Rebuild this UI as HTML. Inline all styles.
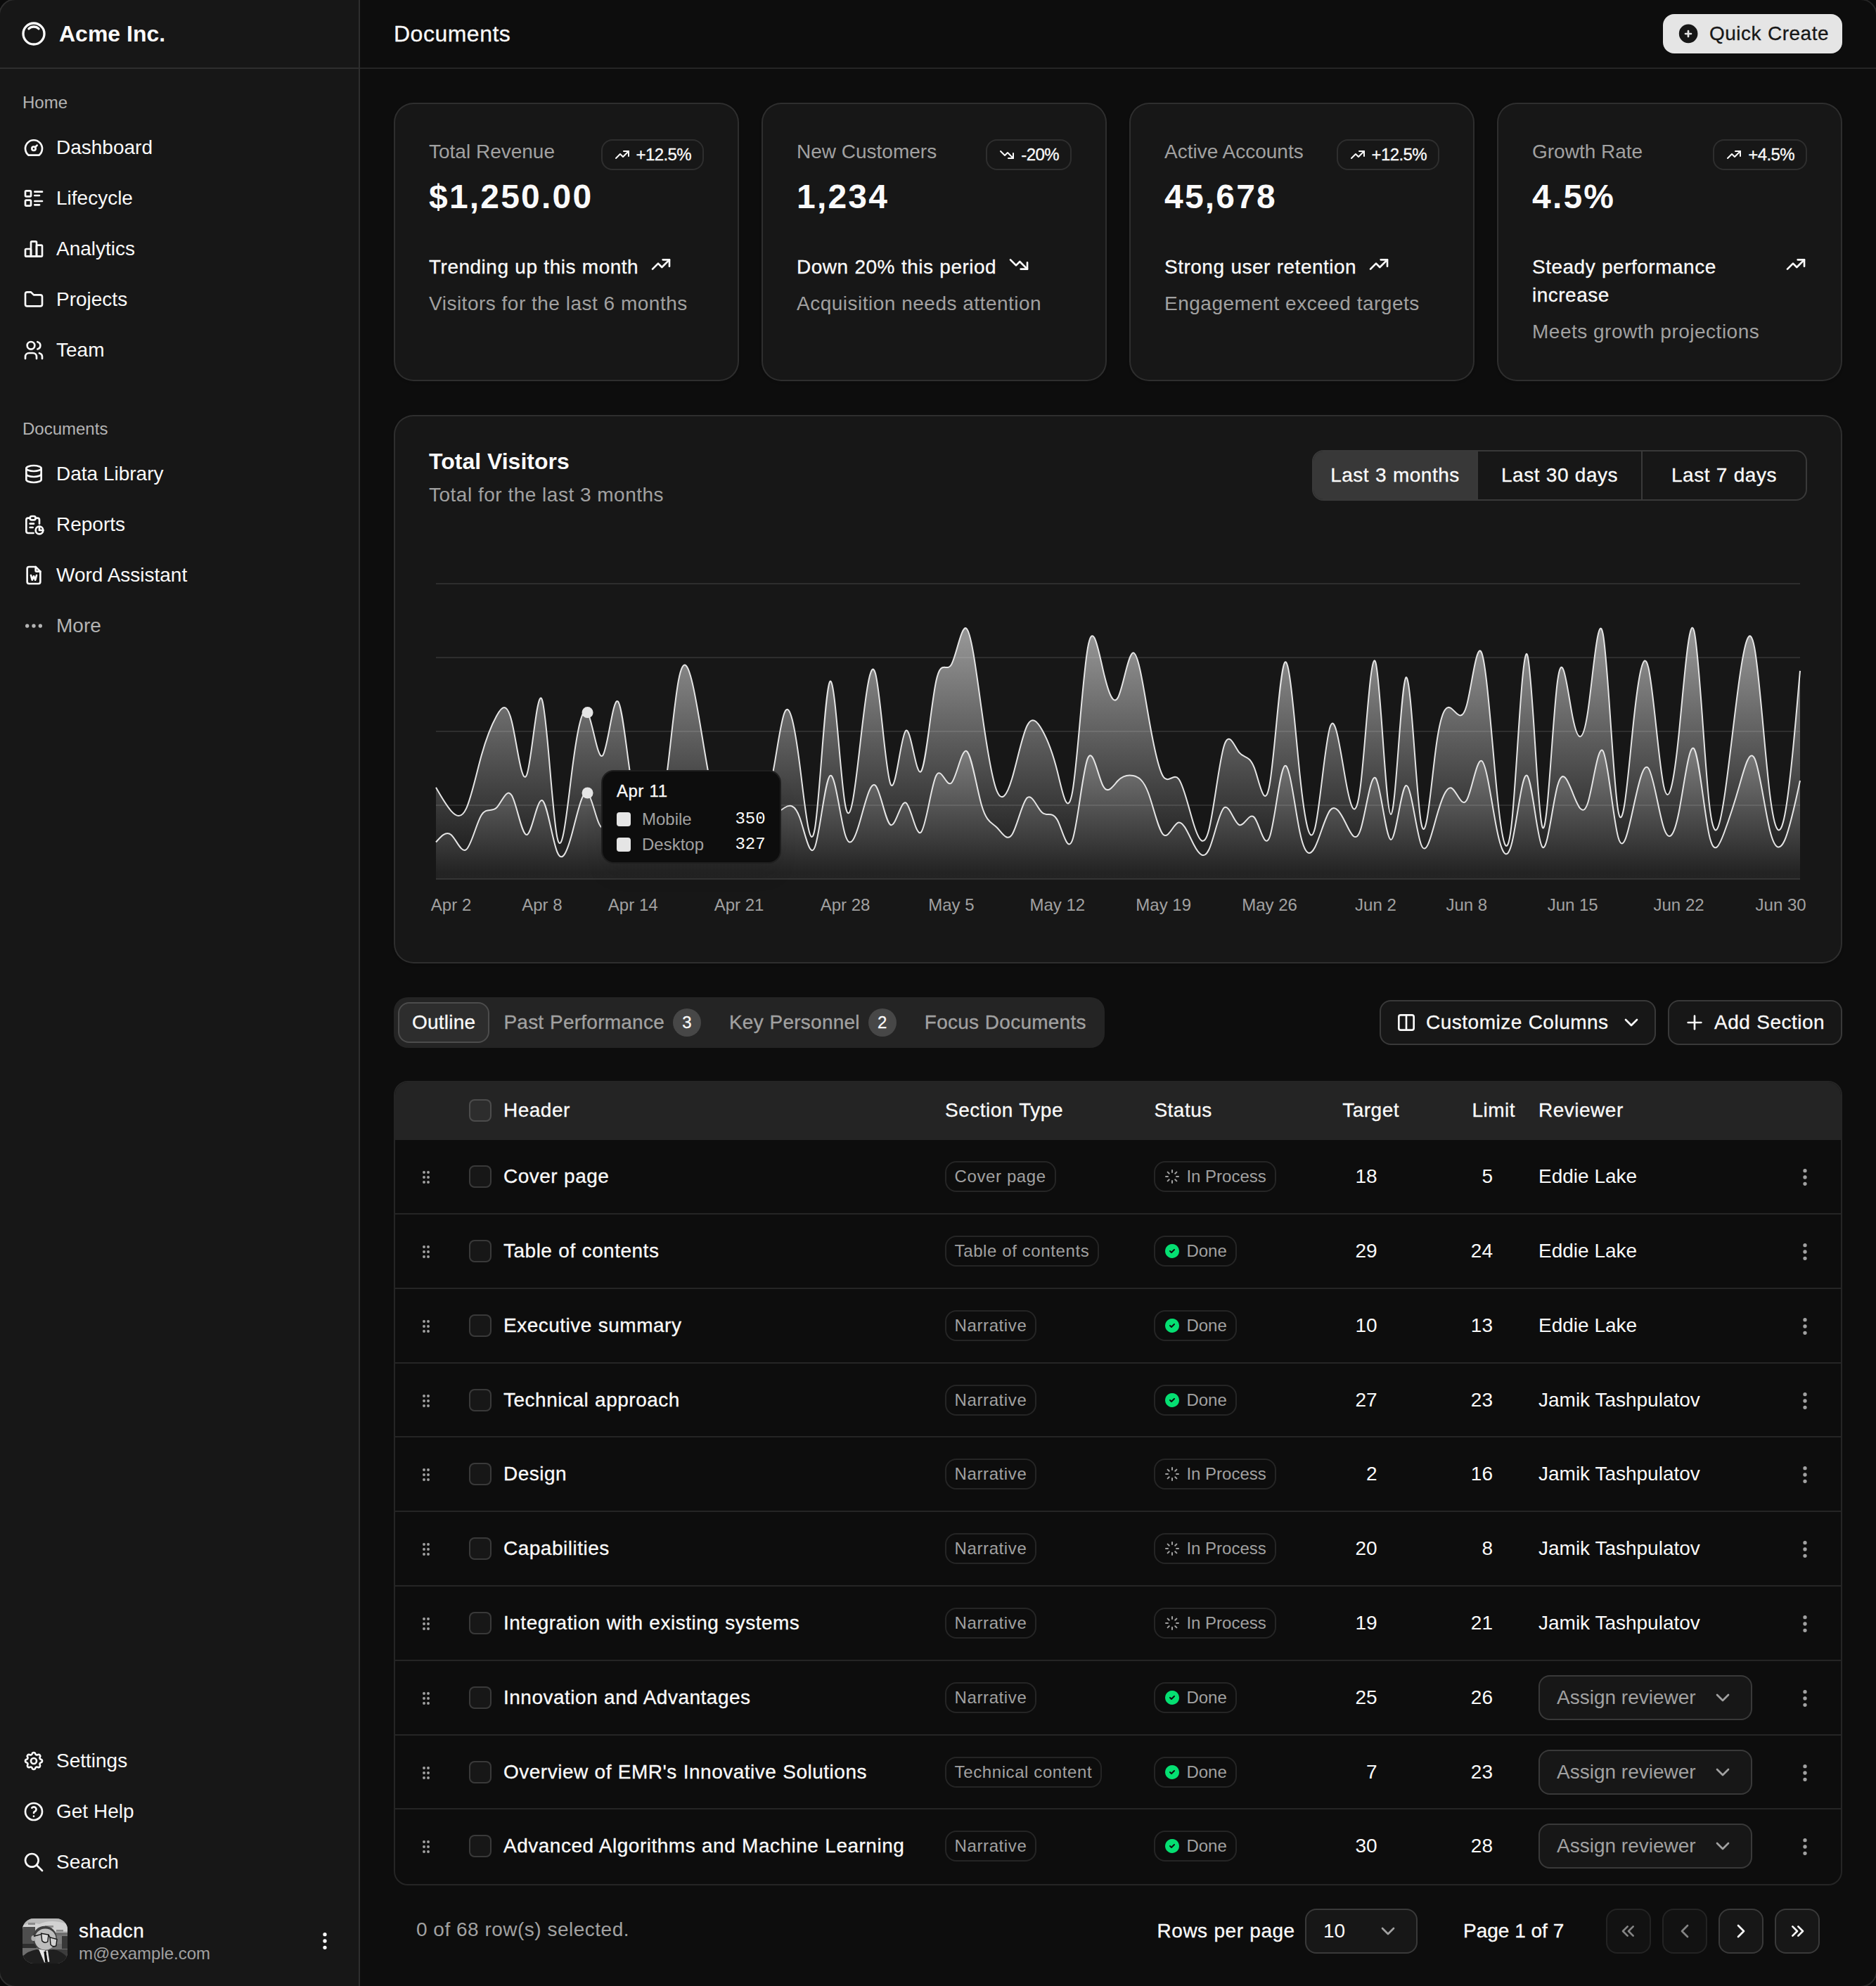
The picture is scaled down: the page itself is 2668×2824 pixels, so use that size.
<!DOCTYPE html><html><head><meta charset="utf-8"><title>Documents</title><style>
*{box-sizing:border-box;margin:0;padding:0}
html,body{background:#0d0d0d;width:2668px;height:2824px;overflow:hidden}
body{font-family:"Liberation Sans",sans-serif;color:#fafafa;-webkit-font-smoothing:antialiased}
#root{zoom:2;position:relative;width:1334px;height:1412px;overflow:hidden;background:#0d0d0d}
@media (max-width:2000px){html,body{width:1334px;height:1412px}#root{zoom:1}}
.ic{display:block;flex-shrink:0}
.m{letter-spacing:.25px;word-spacing:.3px;-webkit-text-stroke:.15px currentColor}
.ws{letter-spacing:.25px}
.abs{position:absolute}
/* sidebar */
.sb{position:absolute;left:0;top:0;width:256px;height:1412px;background:#171717;border-right:1px solid rgba(255,255,255,.1)}
.sb-head{position:absolute;left:0;top:0;width:255px;height:49px;border-bottom:1px solid rgba(255,255,255,.1)}
.logo{position:absolute;left:14px;top:14px}
.brand{position:absolute;left:42px;top:12px;font-size:16px;line-height:24px;font-weight:700}
.grp-label{position:absolute;left:16px;height:32px;line-height:32px;font-size:12px;color:rgba(250,250,250,.7)}
.nav{position:absolute;left:8px;width:239px;height:32px;display:flex;align-items:center;gap:8px;padding:0 8px;font-size:14px;line-height:20px}
.nav.dim{color:rgba(250,250,250,.7)}
.user{position:absolute;left:8px;top:1356px;width:239px;height:48px;display:flex;align-items:center;gap:8px;padding:0 8px}
.avatar{width:32px;height:32px;border-radius:8px;overflow:hidden;flex-shrink:0;position:relative;background:#6b6b6b}
.uname{font-size:14px;line-height:17.5px}
.umail{font-size:12px;line-height:15px;color:#a1a1a1}
/* main */
.main{position:absolute;left:256px;top:0;width:1078px;height:1412px}
.mhead{position:absolute;left:0;top:0;width:1078px;height:49px;border-bottom:1px solid rgba(255,255,255,.1)}
.mtitle{position:absolute;left:24px;top:12px;font-size:16px;line-height:24px}
.qc{position:absolute;left:926.5px;top:10px;width:127.5px;height:28px;border-radius:8px;background:#e5e5e5;color:#171717;display:flex;align-items:center;padding-left:10px;gap:7px;font-size:14px;line-height:20px}
.card{position:absolute;background:#171717;border:1px solid rgba(255,255,255,.1);border-radius:14px;box-shadow:0 1px 2px rgba(0,0,0,.05)}
.kpi{top:73px;width:245.5px;height:198px}
.kpi .desc{position:absolute;left:24px;top:24px;font-size:14px;line-height:20px;color:#a1a1a1}
.kpi .val{position:absolute;left:24px;top:50px;font-size:24px;line-height:32px;font-weight:700;letter-spacing:1.1px}
.badge{position:absolute;right:24px;top:25px;height:22px;border:1px solid rgba(255,255,255,.1);border-radius:8px;display:flex;align-items:center;gap:4px;padding:0 8px;font-size:12px;line-height:16px}
.kpi .foot{position:absolute;left:24px;top:106px;width:195.5px;font-size:14px;line-height:20px}
.kpi .f1{display:flex;gap:8px;align-items:flex-start}
.kpi .f1 svg{margin-top:0}
.kpi .f2{margin-top:6px;color:#a1a1a1}
/* chart */
.chartcard{left:24px;top:295px;width:1030px;height:390px}
.ct{position:absolute;left:24px;top:24px;font-size:16px;line-height:16px;font-weight:700}
.cd{position:absolute;left:24px;top:46px;font-size:14px;line-height:20px;color:#a1a1a1}
.tg{position:absolute;right:24px;top:24px;width:352px;height:36px;border:1px solid rgba(255,255,255,.15);border-radius:8px;display:flex;overflow:hidden}
.tg div{flex:1;display:flex;align-items:center;justify-content:center;font-size:14px;line-height:20px;border-left:1px solid rgba(255,255,255,.15)}
.tg div:first-child{border-left:0;background:#383838}
.chart{position:absolute;left:24px;top:114px;width:980px;height:250px}
.tip{position:absolute;left:122.5px;top:137.3px;width:127.8px;height:66.5px;background:#0d0d0d;border:1px solid rgba(255,255,255,.08);border-radius:9px;padding:6px 10px;font-size:12px;line-height:16px;box-shadow:0 10px 15px -3px rgba(0,0,0,.1)}
.tip .row{display:flex;align-items:center;height:18px}
.tip .sq{width:10px;height:10px;border-radius:2px;background:#e5e5e5;margin-right:8px}
.tip .lbl{color:#a1a1a1;flex:1}
.tip .num{font-family:"Liberation Mono",monospace;color:#fafafa}
/* tabs */
.tabs{position:absolute;left:24px;top:709px;height:36px;white-space:nowrap;background:#242424;border-radius:10px;padding:3px;display:flex}
.tab{height:29px;margin-top:.5px;display:flex;align-items:center;gap:6px;padding:0 9px;font-size:14px;line-height:20px;color:#a1a1a1;border:1px solid transparent;border-radius:8px}
.tab.on{background:rgba(255,255,255,.045);border-color:rgba(255,255,255,.15);color:#fafafa}
.tabs.m{letter-spacing:.12px}
.tab .cnt{letter-spacing:0;width:20px;height:20px;border-radius:10px;background:#474747;color:#fafafa;font-size:12px;display:flex;align-items:center;justify-content:center}
.btn{position:absolute;top:711px;white-space:nowrap;height:32px;border:1px solid rgba(255,255,255,.15);background:rgba(255,255,255,.045);border-radius:8px;display:flex;align-items:center;gap:8px;font-size:14px;line-height:20px}
/* table */
.tbl{position:absolute;left:24px;top:768.6px;width:1030px;height:572px;border:1px solid rgba(255,255,255,.1);border-radius:10px;overflow:hidden}
.thead{position:absolute;left:0;top:0;width:1028px;height:41px;background:#242424}
.tr{position:absolute;left:0;width:1028px;height:52.9px;border-bottom:1px solid rgba(255,255,255,.1)}
.tr.last{border-bottom:0}
.c{position:absolute;font-size:14px;line-height:20px;white-space:nowrap}
.th{top:10px}
.td{top:16px}
.cb{position:absolute;left:52.5px;width:16px;height:16px;border-radius:4px;border:1px solid rgba(255,255,255,.15);background:rgba(255,255,255,.045)}
.grip{position:absolute;left:16px;top:20.5px;color:#a1a1a1}
.pill{position:absolute;top:15px;height:22px;border:1px solid rgba(255,255,255,.1);border-radius:8px;padding:0 6px;display:flex;align-items:center;gap:4px;font-size:12px;line-height:16px;color:#a1a1a1;white-space:nowrap}
.num{text-align:right;width:40px}
.sel{position:absolute;left:813px;top:10px;width:152px;height:32px;border:1px solid rgba(255,255,255,.15);background:rgba(255,255,255,.045);border-radius:8px;display:flex;align-items:center;justify-content:space-between;padding:0 12px;font-size:14px;line-height:20px;color:#a1a1a1}
.act{position:absolute;left:994.5px;top:18.5px;color:#a1a1a1}
/* footer */
.foot-l{position:absolute;left:40px;top:1362px;font-size:14px;line-height:20px;color:#a1a1a1}
.foot-r{position:absolute;top:1357px;height:32px;display:flex;align-items:center;font-size:14px;line-height:20px}
.pbtn{position:absolute;top:1357px;width:32px;height:32px;border:1px solid rgba(255,255,255,.15);background:rgba(255,255,255,.045);border-radius:8px;display:flex;align-items:center;justify-content:center}
.pbtn.dis{opacity:.5}
.frame{position:absolute;left:-1px;top:-1px;width:1336px;height:1414px;border:1px solid rgba(255,255,255,.1);border-radius:12px;box-shadow:0 0 0 40px #0b0b0b;pointer-events:none;z-index:10}
</style></head><body><div id="root"><aside class="sb"><div class="sb-head"><svg class="ic logo" style="" width="20" height="20" viewBox="0 0 24 24" fill="none" stroke="currentColor" stroke-width="2" stroke-linecap="round" stroke-linejoin="round"><path d="M5.636 5.636a9 9 0 1 0 12.728 12.728a9 9 0 0 0 -12.728 -12.728z"/><path d="M16.243 7.757a6 6 0 0 0 -8.486 0"/></svg><div class="brand">Acme Inc.</div></div><div class="grp-label" style="top:57px">Home</div><div class="nav" style="top:89px"><svg class="ic " style="" width="16" height="16" viewBox="0 0 24 24" fill="none" stroke="currentColor" stroke-width="2" stroke-linecap="round" stroke-linejoin="round"><path d="M12 13m-2 0a2 2 0 1 0 4 0a2 2 0 1 0 -4 0"/><path d="M13.45 11.55l2.05 -2.05"/><path d="M6.4 20a9 9 0 1 1 11.2 0z"/></svg><span>Dashboard</span></div><div class="nav" style="top:125px"><svg class="ic " style="" width="16" height="16" viewBox="0 0 24 24" fill="none" stroke="currentColor" stroke-width="2" stroke-linecap="round" stroke-linejoin="round"><path d="M13 5h8"/><path d="M13 9h5"/><path d="M13 15h8"/><path d="M13 19h5"/><path d="M3 4m0 1a1 1 0 0 1 1 -1h4a1 1 0 0 1 1 1v4a1 1 0 0 1 -1 1h-4a1 1 0 0 1 -1 -1z"/><path d="M3 14m0 1a1 1 0 0 1 1 -1h4a1 1 0 0 1 1 1v4a1 1 0 0 1 -1 1h-4a1 1 0 0 1 -1 -1z"/></svg><span>Lifecycle</span></div><div class="nav" style="top:161px"><svg class="ic " style="" width="16" height="16" viewBox="0 0 24 24" fill="none" stroke="currentColor" stroke-width="2" stroke-linecap="round" stroke-linejoin="round"><path d="M3 13a1 1 0 0 1 1 -1h4a1 1 0 0 1 1 1v6a1 1 0 0 1 -1 1h-4a1 1 0 0 1 -1 -1z"/><path d="M15 9a1 1 0 0 1 1 -1h4a1 1 0 0 1 1 1v10a1 1 0 0 1 -1 1h-4a1 1 0 0 1 -1 -1z"/><path d="M9 5a1 1 0 0 1 1 -1h4a1 1 0 0 1 1 1v14a1 1 0 0 1 -1 1h-4a1 1 0 0 1 -1 -1z"/><path d="M4 20h14"/></svg><span>Analytics</span></div><div class="nav" style="top:197px"><svg class="ic " style="" width="16" height="16" viewBox="0 0 24 24" fill="none" stroke="currentColor" stroke-width="2" stroke-linecap="round" stroke-linejoin="round"><path d="M5 4h4l3 3h7a2 2 0 0 1 2 2v8a2 2 0 0 1 -2 2h-14a2 2 0 0 1 -2 -2v-11a2 2 0 0 1 2 -2"/></svg><span>Projects</span></div><div class="nav" style="top:233px"><svg class="ic " style="" width="16" height="16" viewBox="0 0 24 24" fill="none" stroke="currentColor" stroke-width="2" stroke-linecap="round" stroke-linejoin="round"><path d="M9 7m-4 0a4 4 0 1 0 8 0a4 4 0 1 0 -8 0"/><path d="M3 21v-2a4 4 0 0 1 4 -4h4a4 4 0 0 1 4 4v2"/><path d="M16 3.13a4 4 0 0 1 0 7.75"/><path d="M21 21v-2a4 4 0 0 0 -3 -3.85"/></svg><span>Team</span></div><div class="grp-label" style="top:289px">Documents</div><div class="nav " style="top:321px"><svg class="ic " style="" width="16" height="16" viewBox="0 0 24 24" fill="none" stroke="currentColor" stroke-width="2" stroke-linecap="round" stroke-linejoin="round"><path d="M12 6m-8 0a8 3 0 1 0 16 0a8 3 0 1 0 -16 0"/><path d="M4 6v6a8 3 0 0 0 16 0v-6"/><path d="M4 12v6a8 3 0 0 0 16 0v-6"/></svg><span>Data Library</span></div><div class="nav " style="top:357px"><svg class="ic " style="" width="16" height="16" viewBox="0 0 24 24" fill="none" stroke="currentColor" stroke-width="2" stroke-linecap="round" stroke-linejoin="round"><path d="M8 5h-2a2 2 0 0 0 -2 2v12a2 2 0 0 0 2 2h5.697"/><path d="M18 14v4h4"/><path d="M18 11v-4a2 2 0 0 0 -2 -2h-2"/><path d="M8 3m0 2a2 2 0 0 1 2 -2h2a2 2 0 0 1 2 2v0a2 2 0 0 1 -2 2h-2a2 2 0 0 1 -2 -2z"/><path d="M18 18m-4 0a4 4 0 1 0 8 0a4 4 0 1 0 -8 0"/><path d="M8 11h4"/><path d="M8 15h3"/></svg><span>Reports</span></div><div class="nav " style="top:393px"><svg class="ic " style="" width="16" height="16" viewBox="0 0 24 24" fill="none" stroke="currentColor" stroke-width="2" stroke-linecap="round" stroke-linejoin="round"><path d="M14 3v4a1 1 0 0 0 1 1h4"/><path d="M17 21h-10a2 2 0 0 1 -2 -2v-14a2 2 0 0 1 2 -2h7l5 5v11a2 2 0 0 1 -2 2z"/><path d="M9 12l1.333 5l1.667 -4l1.667 4l1.333 -5"/></svg><span>Word Assistant</span></div><div class="nav dim" style="top:429px"><svg class="ic " style="" width="16" height="16" viewBox="0 0 24 24" fill="none" stroke="currentColor" stroke-width="2" stroke-linecap="round" stroke-linejoin="round"><path d="M5 12m-1 0a1 1 0 1 0 2 0a1 1 0 1 0 -2 0"/><path d="M12 12m-1 0a1 1 0 1 0 2 0a1 1 0 1 0 -2 0"/><path d="M19 12m-1 0a1 1 0 1 0 2 0a1 1 0 1 0 -2 0"/></svg><span>More</span></div><div class="nav" style="top:1236px"><svg class="ic " style="" width="16" height="16" viewBox="0 0 24 24" fill="none" stroke="currentColor" stroke-width="2" stroke-linecap="round" stroke-linejoin="round"><path d="M10.325 4.317c.426 -1.756 2.924 -1.756 3.35 0a1.724 1.724 0 0 0 2.573 1.066c1.543 -.94 3.31 .826 2.37 2.37a1.724 1.724 0 0 0 1.065 2.572c1.756 .426 1.756 2.924 0 3.35a1.724 1.724 0 0 0 -1.066 2.573c.94 1.543 -.826 3.31 -2.37 2.37a1.724 1.724 0 0 0 -2.572 1.065c-.426 1.756 -2.924 1.756 -3.35 0a1.724 1.724 0 0 0 -2.573 -1.066c-1.543 .94 -3.31 -.826 -2.37 -2.37a1.724 1.724 0 0 0 -1.065 -2.572c-1.756 -.426 -1.756 -2.924 0 -3.35a1.724 1.724 0 0 0 1.066 -2.573c-.94 -1.543 .826 -3.31 2.37 -2.37c1 .608 2.296 .07 2.572 -1.065z"/><path d="M9 12a3 3 0 1 0 6 0a3 3 0 0 0 -6 0"/></svg><span>Settings</span></div><div class="nav" style="top:1272px"><svg class="ic " style="" width="16" height="16" viewBox="0 0 24 24" fill="none" stroke="currentColor" stroke-width="2" stroke-linecap="round" stroke-linejoin="round"><path d="M12 12m-9 0a9 9 0 1 0 18 0a9 9 0 1 0 -18 0"/><path d="M12 17l0 .01"/><path d="M12 13.5a1.5 1.5 0 0 1 1 -1.5a2.6 2.6 0 1 0 -3 -4"/></svg><span>Get Help</span></div><div class="nav" style="top:1308px"><svg class="ic " style="" width="16" height="16" viewBox="0 0 24 24" fill="none" stroke="currentColor" stroke-width="2" stroke-linecap="round" stroke-linejoin="round"><path d="M10 10m-7 0a7 7 0 1 0 14 0a7 7 0 1 0 -14 0"/><path d="M21 21l-6 -6"/></svg><span>Search</span></div><div class="user"><div class="avatar"><svg width="32" height="32" viewBox="0 0 32 32">
<rect width="32" height="32" fill="#6e6e6e"/>
<rect x="0" y="0" width="32" height="10" fill="#b9b9b9"/>
<path d="M0 5 q6 -3 12 -1 q8 -4 20 0 v5 h-32z" fill="#d2d2d2"/>
<path d="M4 3 h5 v1.5 h-5z M16 5 h6 v1.4 h-6z M24 8 h5 v1.4 h-5z" fill="#8a8a8a"/>
<path d="M0 6 h9 v15 h-9z" fill="#4e4e4e"/>
<path d="M0 18 h10 v3 h-10z" fill="#2e2e2e"/>
<path d="M22 12 h10 v6 h-10z" fill="#7a7a7a"/>
<path d="M28 12.5 h4 v9 h-4z" fill="#383838"/>
<path d="M19 22 h13 v10 h-13z" fill="#3c3c3c"/>
<circle cx="15.8" cy="14" r="8.6" fill="#3f3f3f"/>
<circle cx="16.2" cy="14.8" r="7.6" fill="#bdbdbd"/>
<ellipse cx="7.8" cy="14" rx="1.6" ry="2" fill="#b0b0b0"/>
<path d="M0 27 q4 -4 10 -5 l6 1 l6 -1 q6 1 10 6 v4 h-32z" fill="#1f1f1f"/>
<path d="M11.5 21.8 l4 9.5 l1.5 0 l-1 -8.5z M16.5 23 l1.5 8 l1.2 -0.3 l-1.2 -8z" fill="#e6e6e6"/>
<path d="M15.2 23.5 l1.6 0 l0.9 7.8 l-1.6 0z" fill="#0f0f0f"/>
<path d="M8 12.6 l5 -1.3" stroke="#111" stroke-width=".7" fill="none"/>
<path d="M13.3 10.6 l5.2 .9 l-.6 5 q-2.4 1.4 -4 -.6z" fill="#d9d9d9" stroke="#111" stroke-width=".7"/>
<path d="M19.5 13.4 l5 1.4 l-.6 4.6 q-2.4 1.2 -3.9 -.8z" fill="#d0d0d0" stroke="#111" stroke-width=".7"/>
<path d="M18.5 11.6 l1 1.8" stroke="#111" stroke-width=".7"/>
</svg></div><div style="flex:1;min-width:0"><div class="uname m">shadcn</div><div class="umail">m@example.com</div></div><svg class="ic " style="" width="16" height="16" viewBox="0 0 24 24" fill="none" stroke="currentColor" stroke-width="2" stroke-linecap="round" stroke-linejoin="round"><path d="M12 12m-1 0a1 1 0 1 0 2 0a1 1 0 1 0 -2 0"/><path d="M12 19m-1 0a1 1 0 1 0 2 0a1 1 0 1 0 -2 0"/><path d="M12 5m-1 0a1 1 0 1 0 2 0a1 1 0 1 0 -2 0"/></svg></div></aside><main class="main"><div class="mhead"><div class="mtitle m">Documents</div><div class="qc"><svg class="ic " style="" width="16" height="16" viewBox="0 0 24 24" fill="currentColor"><path d="M4.929 4.929a10 10 0 1 1 14.141 14.141a10 10 0 0 1 -14.14 -14.14zm8.071 4.071a1 1 0 1 0 -2 0v2h-2a1 1 0 1 0 0 2h2v2a1 1 0 1 0 2 0v-2h2a1 1 0 1 0 0 -2h-2v-2z"/></svg><span class="m">Quick Create</span></div></div><div class="card kpi" style="left:24.0px"><div class="desc">Total Revenue</div><div class="badge"><svg class="ic " style="" width="12" height="12" viewBox="0 0 24 24" fill="none" stroke="currentColor" stroke-width="2" stroke-linecap="round" stroke-linejoin="round"><path d="M3 17l6 -6l4 4l8 -8"/><path d="M14 7l7 0l0 7"/></svg><span style="letter-spacing:-.3px;-webkit-text-stroke:.15px currentColor">+12.5%</span></div><div class="val">$1,250.00</div><div class="foot"><div class="f1"><span class="m">Trending up this month</span><svg class="ic " style="" width="16" height="16" viewBox="0 0 24 24" fill="none" stroke="currentColor" stroke-width="2" stroke-linecap="round" stroke-linejoin="round"><path d="M3 17l6 -6l4 4l8 -8"/><path d="M14 7l7 0l0 7"/></svg></div><div class="f2 ws">Visitors for the last 6 months</div></div></div><div class="card kpi" style="left:285.5px"><div class="desc">New Customers</div><div class="badge"><svg class="ic " style="" width="12" height="12" viewBox="0 0 24 24" fill="none" stroke="currentColor" stroke-width="2" stroke-linecap="round" stroke-linejoin="round"><path d="M3 7l6 6l4 -4l8 8"/><path d="M21 10l0 7l-7 0"/></svg><span style="letter-spacing:-.3px;-webkit-text-stroke:.15px currentColor">-20%</span></div><div class="val">1,234</div><div class="foot"><div class="f1"><span class="m">Down 20% this period</span><svg class="ic " style="" width="16" height="16" viewBox="0 0 24 24" fill="none" stroke="currentColor" stroke-width="2" stroke-linecap="round" stroke-linejoin="round"><path d="M3 7l6 6l4 -4l8 8"/><path d="M21 10l0 7l-7 0"/></svg></div><div class="f2 ws">Acquisition needs attention</div></div></div><div class="card kpi" style="left:547.0px"><div class="desc">Active Accounts</div><div class="badge"><svg class="ic " style="" width="12" height="12" viewBox="0 0 24 24" fill="none" stroke="currentColor" stroke-width="2" stroke-linecap="round" stroke-linejoin="round"><path d="M3 17l6 -6l4 4l8 -8"/><path d="M14 7l7 0l0 7"/></svg><span style="letter-spacing:-.3px;-webkit-text-stroke:.15px currentColor">+12.5%</span></div><div class="val">45,678</div><div class="foot"><div class="f1"><span class="m">Strong user retention</span><svg class="ic " style="" width="16" height="16" viewBox="0 0 24 24" fill="none" stroke="currentColor" stroke-width="2" stroke-linecap="round" stroke-linejoin="round"><path d="M3 17l6 -6l4 4l8 -8"/><path d="M14 7l7 0l0 7"/></svg></div><div class="f2 ws">Engagement exceed targets</div></div></div><div class="card kpi" style="left:808.5px"><div class="desc">Growth Rate</div><div class="badge"><svg class="ic " style="" width="12" height="12" viewBox="0 0 24 24" fill="none" stroke="currentColor" stroke-width="2" stroke-linecap="round" stroke-linejoin="round"><path d="M3 17l6 -6l4 4l8 -8"/><path d="M14 7l7 0l0 7"/></svg><span style="letter-spacing:-.3px;-webkit-text-stroke:.15px currentColor">+4.5%</span></div><div class="val">4.5%</div><div class="foot"><div class="f1"><span class="m">Steady performance increase</span><svg class="ic " style="" width="16" height="16" viewBox="0 0 24 24" fill="none" stroke="currentColor" stroke-width="2" stroke-linecap="round" stroke-linejoin="round"><path d="M3 17l6 -6l4 4l8 -8"/><path d="M14 7l7 0l0 7"/></svg></div><div class="f2 ws">Meets growth projections</div></div></div><div class="card chartcard"><div class="ct">Total Visitors</div><div class="cd ws">Total for the last 3 months</div><div class="tg m"><div>Last 3 months</div><div>Last 30 days</div><div>Last 7 days</div></div><div class="chart"><svg width="980" height="250" viewBox="0 0 980 250" style="position:absolute;left:0;top:0;overflow:visible"><defs><linearGradient id="gD" x1="0" y1="0" x2="0" y2="1"><stop offset="5%" stop-color="#e5e5e5" stop-opacity="1"/><stop offset="95%" stop-color="#e5e5e5" stop-opacity="0.1"/></linearGradient><linearGradient id="gM" x1="0" y1="0" x2="0" y2="1"><stop offset="5%" stop-color="#e5e5e5" stop-opacity="0.8"/><stop offset="95%" stop-color="#e5e5e5" stop-opacity="0.1"/></linearGradient></defs><line x1="5" x2="975" y1="5.0" y2="5.0" stroke="rgba(255,255,255,0.1)" stroke-width="1"/><line x1="5" x2="975" y1="57.5" y2="57.5" stroke="rgba(255,255,255,0.1)" stroke-width="1"/><line x1="5" x2="975" y1="110.0" y2="110.0" stroke="rgba(255,255,255,0.1)" stroke-width="1"/><line x1="5" x2="975" y1="162.5" y2="162.5" stroke="rgba(255,255,255,0.1)" stroke-width="1"/><line x1="5" x2="975" y1="215.0" y2="215.0" stroke="rgba(255,255,255,0.1)" stroke-width="1"/><path d="M5,188.75C8.59,184.6,12.19,180.45,15.78,183.5C19.37,186.55,22.96,196.8,26.56,194C30.15,191.2,33.74,175.36,37.33,169.5C40.93,163.64,44.52,167.76,48.11,164.25C51.7,160.74,55.3,149.59,58.89,155.5C62.48,161.41,66.07,184.37,69.67,183.5C73.26,182.63,76.85,157.91,80.44,159C84.04,160.09,87.63,186.99,91.22,195.75C94.81,204.51,98.41,195.15,102,181.75C105.59,168.35,109.19,150.93,112.78,153.75C116.37,156.57,119.96,179.64,123.56,178.25C127.15,176.86,130.74,151.02,134.33,148.5C137.93,145.98,141.52,166.77,145.11,176.5C148.7,186.23,152.3,184.9,155.89,185.25C159.48,185.6,163.07,187.62,166.67,181.75C170.26,175.88,173.85,162.12,177.44,152C181.04,141.88,184.63,135.42,188.22,143.25C191.81,151.08,195.41,173.22,199,183.5C202.59,193.78,206.19,192.2,209.78,188.75C213.37,185.3,216.96,179.97,220.56,180C224.15,180.03,227.74,185.4,231.33,185.25C234.93,185.1,238.52,179.42,242.11,174.75C245.7,170.08,249.3,166.42,252.89,164.25C256.48,162.08,260.07,161.41,263.67,171.25C267.26,181.09,270.85,201.44,274.44,192.25C278.04,183.06,281.63,144.32,285.22,141.5C288.81,138.68,292.41,171.78,296,183.5C299.59,195.22,303.19,185.58,306.78,173C310.37,160.42,313.96,144.91,317.56,148.5C321.15,152.09,324.74,174.77,328.33,176.5C331.93,178.23,335.52,159,339.11,160.75C342.7,162.5,346.3,185.22,349.89,181.75C353.48,178.28,357.07,148.63,360.67,141.5C364.26,134.37,367.85,149.75,371.44,146.75C375.04,143.75,378.63,122.38,382.22,124C385.81,125.62,389.41,150.22,393,162.5C396.59,174.78,400.19,174.75,403.78,178.25C407.37,181.75,410.96,188.77,414.56,183.5C418.15,178.23,421.74,160.65,425.33,157.25C428.93,153.85,432.52,164.62,436.11,167.75C439.7,170.88,443.3,166.37,446.89,173C450.48,179.63,454.07,197.4,457.67,187C461.26,176.6,464.85,138.04,468.44,129.25C472.04,120.46,475.63,141.44,479.22,148.5C482.81,155.56,486.41,148.7,490,145C493.59,141.3,497.19,140.78,500.78,141.5C504.37,142.22,507.96,144.19,511.56,153.75C515.15,163.31,518.74,180.46,522.33,183.5C525.93,186.54,529.52,175.48,533.11,174.75C536.7,174.02,540.3,183.61,543.89,190.5C547.48,197.39,551.07,201.58,554.67,194C558.26,186.42,561.85,167.08,565.44,164.25C569.04,161.42,572.63,175.1,576.22,176.5C579.81,177.9,583.41,167.02,587,171.25C590.59,175.48,594.19,194.82,597.78,185.25C601.37,175.68,604.96,137.2,608.56,134.5C612.15,131.8,615.74,164.88,619.33,181.75C622.93,198.62,626.52,199.3,630.11,192.25C633.7,185.2,637.3,170.44,640.89,166C644.48,161.56,648.07,167.45,651.67,174.75C655.26,182.05,658.85,190.77,662.44,180C666.04,169.23,669.63,138.97,673.22,143.25C676.81,147.53,680.41,186.36,684,187C687.59,187.64,691.19,150.11,694.78,148.5C698.37,146.89,701.96,181.22,705.56,190.5C709.15,199.78,712.74,184.03,716.33,171.25C719.93,158.47,723.52,148.67,727.11,150.25C730.7,151.83,734.3,164.78,737.89,159C741.48,153.22,745.07,128.7,748.67,131C752.26,133.3,755.85,162.41,759.44,180C763.04,197.59,766.63,203.67,770.22,188.75C773.81,173.83,777.41,137.92,781,141.5C784.59,145.08,788.19,188.17,791.78,192.25C795.37,196.33,798.96,161.41,802.56,148.5C806.15,135.59,809.74,144.68,813.33,153.75C816.93,162.82,820.52,171.88,824.11,160.75C827.7,149.62,831.3,118.29,834.89,124C838.48,129.71,842.07,172.45,845.67,185.25C849.26,198.05,852.85,180.92,856.44,164.25C860.04,147.58,863.63,131.36,867.22,136.25C870.81,141.14,874.41,167.13,878,178.25C881.59,189.37,885.19,185.62,888.78,167.75C892.37,149.88,895.96,117.9,899.56,122.25C903.15,126.6,906.74,167.3,910.33,183.5C913.93,199.7,917.52,191.41,921.11,181.75C924.7,172.09,928.3,161.05,931.89,148.5C935.48,135.95,939.07,121.9,942.67,129.25C946.26,136.6,949.85,165.35,953.44,180C957.04,194.65,960.63,195.18,964.22,187C967.81,178.82,971.41,161.91,975,145L975,215L5,215Z" fill="url(#gM)" fill-opacity="0.6"/><path d="M5,188.75C8.59,184.6,12.19,180.45,15.78,183.5C19.37,186.55,22.96,196.8,26.56,194C30.15,191.2,33.74,175.36,37.33,169.5C40.93,163.64,44.52,167.76,48.11,164.25C51.7,160.74,55.3,149.59,58.89,155.5C62.48,161.41,66.07,184.37,69.67,183.5C73.26,182.63,76.85,157.91,80.44,159C84.04,160.09,87.63,186.99,91.22,195.75C94.81,204.51,98.41,195.15,102,181.75C105.59,168.35,109.19,150.93,112.78,153.75C116.37,156.57,119.96,179.64,123.56,178.25C127.15,176.86,130.74,151.02,134.33,148.5C137.93,145.98,141.52,166.77,145.11,176.5C148.7,186.23,152.3,184.9,155.89,185.25C159.48,185.6,163.07,187.62,166.67,181.75C170.26,175.88,173.85,162.12,177.44,152C181.04,141.88,184.63,135.42,188.22,143.25C191.81,151.08,195.41,173.22,199,183.5C202.59,193.78,206.19,192.2,209.78,188.75C213.37,185.3,216.96,179.97,220.56,180C224.15,180.03,227.74,185.4,231.33,185.25C234.93,185.1,238.52,179.42,242.11,174.75C245.7,170.08,249.3,166.42,252.89,164.25C256.48,162.08,260.07,161.41,263.67,171.25C267.26,181.09,270.85,201.44,274.44,192.25C278.04,183.06,281.63,144.32,285.22,141.5C288.81,138.68,292.41,171.78,296,183.5C299.59,195.22,303.19,185.58,306.78,173C310.37,160.42,313.96,144.91,317.56,148.5C321.15,152.09,324.74,174.77,328.33,176.5C331.93,178.23,335.52,159,339.11,160.75C342.7,162.5,346.3,185.22,349.89,181.75C353.48,178.28,357.07,148.63,360.67,141.5C364.26,134.37,367.85,149.75,371.44,146.75C375.04,143.75,378.63,122.38,382.22,124C385.81,125.62,389.41,150.22,393,162.5C396.59,174.78,400.19,174.75,403.78,178.25C407.37,181.75,410.96,188.77,414.56,183.5C418.15,178.23,421.74,160.65,425.33,157.25C428.93,153.85,432.52,164.62,436.11,167.75C439.7,170.88,443.3,166.37,446.89,173C450.48,179.63,454.07,197.4,457.67,187C461.26,176.6,464.85,138.04,468.44,129.25C472.04,120.46,475.63,141.44,479.22,148.5C482.81,155.56,486.41,148.7,490,145C493.59,141.3,497.19,140.78,500.78,141.5C504.37,142.22,507.96,144.19,511.56,153.75C515.15,163.31,518.74,180.46,522.33,183.5C525.93,186.54,529.52,175.48,533.11,174.75C536.7,174.02,540.3,183.61,543.89,190.5C547.48,197.39,551.07,201.58,554.67,194C558.26,186.42,561.85,167.08,565.44,164.25C569.04,161.42,572.63,175.1,576.22,176.5C579.81,177.9,583.41,167.02,587,171.25C590.59,175.48,594.19,194.82,597.78,185.25C601.37,175.68,604.96,137.2,608.56,134.5C612.15,131.8,615.74,164.88,619.33,181.75C622.93,198.62,626.52,199.3,630.11,192.25C633.7,185.2,637.3,170.44,640.89,166C644.48,161.56,648.07,167.45,651.67,174.75C655.26,182.05,658.85,190.77,662.44,180C666.04,169.23,669.63,138.97,673.22,143.25C676.81,147.53,680.41,186.36,684,187C687.59,187.64,691.19,150.11,694.78,148.5C698.37,146.89,701.96,181.22,705.56,190.5C709.15,199.78,712.74,184.03,716.33,171.25C719.93,158.47,723.52,148.67,727.11,150.25C730.7,151.83,734.3,164.78,737.89,159C741.48,153.22,745.07,128.7,748.67,131C752.26,133.3,755.85,162.41,759.44,180C763.04,197.59,766.63,203.67,770.22,188.75C773.81,173.83,777.41,137.92,781,141.5C784.59,145.08,788.19,188.17,791.78,192.25C795.37,196.33,798.96,161.41,802.56,148.5C806.15,135.59,809.74,144.68,813.33,153.75C816.93,162.82,820.52,171.88,824.11,160.75C827.7,149.62,831.3,118.29,834.89,124C838.48,129.71,842.07,172.45,845.67,185.25C849.26,198.05,852.85,180.92,856.44,164.25C860.04,147.58,863.63,131.36,867.22,136.25C870.81,141.14,874.41,167.13,878,178.25C881.59,189.37,885.19,185.62,888.78,167.75C892.37,149.88,895.96,117.9,899.56,122.25C903.15,126.6,906.74,167.3,910.33,183.5C913.93,199.7,917.52,191.41,921.11,181.75C924.7,172.09,928.3,161.05,931.89,148.5C935.48,135.95,939.07,121.9,942.67,129.25C946.26,136.6,949.85,165.35,953.44,180C957.04,194.65,960.63,195.18,964.22,187C967.81,178.82,971.41,161.91,975,145" fill="none" stroke="#e5e5e5" stroke-width="1"/><path d="M5,149.9C8.59,156.19,12.19,162.47,15.78,166.53C19.37,170.58,22.96,172.4,26.56,164.78C30.15,157.15,33.74,140.08,37.33,127.15C40.93,114.22,44.52,105.45,48.11,98.98C51.7,92.5,55.3,88.33,58.89,102.83C62.48,117.32,66.07,150.47,69.67,140.62C73.26,130.78,76.85,77.95,80.44,87.42C84.04,96.9,87.63,168.67,91.22,185.42C94.81,202.18,98.41,163.93,102,136.07C105.59,108.22,109.19,90.76,112.78,96.52C116.37,102.29,119.96,131.29,123.56,127.15C127.15,123.01,130.74,85.73,134.33,88.65C137.93,91.57,141.52,134.69,145.11,152.53C148.7,170.36,152.3,162.91,155.89,164.25C159.48,165.59,163.07,175.71,166.67,157.6C170.26,139.49,173.85,93.14,177.44,73.95C181.04,54.76,184.63,62.74,188.22,79.55C191.81,96.36,195.41,122.02,199,140.97C202.59,159.93,206.19,172.18,209.78,173.17C213.37,174.17,216.96,163.9,220.56,156.03C224.15,148.15,227.74,142.66,231.33,146.05C234.93,149.44,238.52,161.72,242.11,150.6C245.7,139.48,249.3,104.98,252.89,96.52C256.48,88.07,260.07,105.67,263.67,133.62C267.26,161.58,270.85,199.91,274.44,179.12C278.04,158.34,281.63,78.46,285.22,74.47C288.81,70.49,292.41,142.41,296,162.15C299.59,181.89,303.19,149.45,306.78,117.88C310.37,86.3,313.96,55.6,317.56,69.05C321.15,82.5,324.74,140.08,328.33,147.62C331.93,155.17,335.52,112.66,339.11,109.48C342.7,106.29,346.3,142.44,349.89,138.52C353.48,134.61,357.07,90.65,360.67,74.13C364.26,57.6,367.85,68.52,371.44,62.58C375.04,56.63,378.63,33.83,382.22,36.85C385.81,39.87,389.41,68.73,393,94.6C396.59,120.47,400.19,143.37,403.78,152.17C407.37,160.98,410.96,155.71,414.56,143.78C418.15,131.84,421.74,113.25,425.33,105.97C428.93,98.7,432.52,102.76,436.11,109.12C439.7,115.49,443.3,124.17,446.89,138.52C450.48,152.88,454.07,172.91,457.67,152.53C461.26,132.14,464.85,71.34,468.44,50.85C472.04,30.36,475.63,50.18,479.22,65.72C482.81,81.27,486.41,92.53,490,85.85C493.59,79.17,497.19,54.53,500.78,54.17C504.37,53.82,507.96,77.73,511.56,98.62C515.15,119.52,518.74,137.4,522.33,142.38C525.93,147.35,529.52,139.44,533.11,143.78C536.7,148.11,540.3,164.71,543.89,176.15C547.48,187.59,551.07,193.86,554.67,179.83C558.26,165.79,561.85,131.44,565.44,120.15C569.04,108.86,572.63,120.64,576.22,125.05C579.81,129.46,583.41,126.49,587,136.07C590.59,145.66,594.19,167.79,597.78,147.98C601.37,128.16,604.96,66.4,608.56,61C612.15,55.6,615.74,106.55,619.33,140.97C622.93,175.4,626.52,193.28,630.11,178.6C633.7,163.92,637.3,116.66,640.89,106.5C644.48,96.34,648.07,123.29,651.67,143.6C655.26,163.91,658.85,177.6,662.44,148.85C666.04,120.1,669.63,48.91,673.22,61C676.81,73.09,680.41,168.47,684,168.97C687.59,169.48,691.19,75.11,694.78,71.67C698.37,68.24,701.96,155.75,705.56,175.1C709.15,194.45,712.74,145.64,716.33,119.8C719.93,93.96,723.52,91.09,727.11,93.72C730.7,96.36,734.3,104.51,737.89,91.62C741.48,78.74,745.07,44.82,748.67,54.35C752.26,63.88,755.85,116.84,759.44,152.88C763.04,188.91,766.63,208,770.22,172.65C773.81,137.3,777.41,47.52,781,55.4C784.59,63.28,788.19,168.82,791.78,178.08C795.37,187.33,798.96,100.29,802.56,73.95C806.15,47.61,809.74,81.98,813.33,100.03C816.93,118.07,820.52,119.8,824.11,95.83C827.7,71.85,831.3,22.15,834.89,40.87C838.48,59.6,842.07,146.73,845.67,166.53C849.26,186.32,852.85,138.79,856.44,104.57C860.04,70.36,863.63,49.46,867.22,64.85C870.81,80.24,874.41,131.93,878,148.67C881.59,165.42,885.19,147.23,888.78,112.27C892.37,77.32,895.96,25.6,899.56,38.25C903.15,50.9,906.74,127.93,910.33,160.4C913.93,192.87,917.52,180.79,921.11,157.07C924.7,133.36,928.3,98.02,931.89,72.55C935.48,47.08,939.07,31.48,942.67,50.85C946.26,70.22,949.85,124.57,953.44,153.93C957.04,183.28,960.63,187.64,964.22,168.97C967.81,150.31,971.41,108.63,975,66.95L975,145C971.41,161.91,967.81,178.82,964.22,187C960.63,195.18,957.04,194.65,953.44,180C949.85,165.35,946.26,136.6,942.67,129.25C939.07,121.9,935.48,135.95,931.89,148.5C928.3,161.05,924.7,172.09,921.11,181.75C917.52,191.41,913.93,199.7,910.33,183.5C906.74,167.3,903.15,126.6,899.56,122.25C895.96,117.9,892.37,149.88,888.78,167.75C885.19,185.62,881.59,189.37,878,178.25C874.41,167.13,870.81,141.14,867.22,136.25C863.63,131.36,860.04,147.58,856.44,164.25C852.85,180.92,849.26,198.05,845.67,185.25C842.07,172.45,838.48,129.71,834.89,124C831.3,118.29,827.7,149.62,824.11,160.75C820.52,171.88,816.93,162.82,813.33,153.75C809.74,144.68,806.15,135.59,802.56,148.5C798.96,161.41,795.37,196.33,791.78,192.25C788.19,188.17,784.59,145.08,781,141.5C777.41,137.92,773.81,173.83,770.22,188.75C766.63,203.67,763.04,197.59,759.44,180C755.85,162.41,752.26,133.3,748.67,131C745.07,128.7,741.48,153.22,737.89,159C734.3,164.78,730.7,151.83,727.11,150.25C723.52,148.67,719.93,158.47,716.33,171.25C712.74,184.03,709.15,199.78,705.56,190.5C701.96,181.22,698.37,146.89,694.78,148.5C691.19,150.11,687.59,187.64,684,187C680.41,186.36,676.81,147.53,673.22,143.25C669.63,138.97,666.04,169.23,662.44,180C658.85,190.77,655.26,182.05,651.67,174.75C648.07,167.45,644.48,161.56,640.89,166C637.3,170.44,633.7,185.2,630.11,192.25C626.52,199.3,622.93,198.62,619.33,181.75C615.74,164.88,612.15,131.8,608.56,134.5C604.96,137.2,601.37,175.68,597.78,185.25C594.19,194.82,590.59,175.48,587,171.25C583.41,167.02,579.81,177.9,576.22,176.5C572.63,175.1,569.04,161.42,565.44,164.25C561.85,167.08,558.26,186.42,554.67,194C551.07,201.58,547.48,197.39,543.89,190.5C540.3,183.61,536.7,174.02,533.11,174.75C529.52,175.48,525.93,186.54,522.33,183.5C518.74,180.46,515.15,163.31,511.56,153.75C507.96,144.19,504.37,142.22,500.78,141.5C497.19,140.78,493.59,141.3,490,145C486.41,148.7,482.81,155.56,479.22,148.5C475.63,141.44,472.04,120.46,468.44,129.25C464.85,138.04,461.26,176.6,457.67,187C454.07,197.4,450.48,179.63,446.89,173C443.3,166.37,439.7,170.88,436.11,167.75C432.52,164.62,428.93,153.85,425.33,157.25C421.74,160.65,418.15,178.23,414.56,183.5C410.96,188.77,407.37,181.75,403.78,178.25C400.19,174.75,396.59,174.78,393,162.5C389.41,150.22,385.81,125.62,382.22,124C378.63,122.38,375.04,143.75,371.44,146.75C367.85,149.75,364.26,134.37,360.67,141.5C357.07,148.63,353.48,178.28,349.89,181.75C346.3,185.22,342.7,162.5,339.11,160.75C335.52,159,331.93,178.23,328.33,176.5C324.74,174.77,321.15,152.09,317.56,148.5C313.96,144.91,310.37,160.42,306.78,173C303.19,185.58,299.59,195.22,296,183.5C292.41,171.78,288.81,138.68,285.22,141.5C281.63,144.32,278.04,183.06,274.44,192.25C270.85,201.44,267.26,181.09,263.67,171.25C260.07,161.41,256.48,162.08,252.89,164.25C249.3,166.42,245.7,170.08,242.11,174.75C238.52,179.42,234.93,185.1,231.33,185.25C227.74,185.4,224.15,180.03,220.56,180C216.96,179.97,213.37,185.3,209.78,188.75C206.19,192.2,202.59,193.78,199,183.5C195.41,173.22,191.81,151.08,188.22,143.25C184.63,135.42,181.04,141.88,177.44,152C173.85,162.12,170.26,175.88,166.67,181.75C163.07,187.62,159.48,185.6,155.89,185.25C152.3,184.9,148.7,186.23,145.11,176.5C141.52,166.77,137.93,145.98,134.33,148.5C130.74,151.02,127.15,176.86,123.56,178.25C119.96,179.64,116.37,156.57,112.78,153.75C109.19,150.93,105.59,168.35,102,181.75C98.41,195.15,94.81,204.51,91.22,195.75C87.63,186.99,84.04,160.09,80.44,159C76.85,157.91,73.26,182.63,69.67,183.5C66.07,184.37,62.48,161.41,58.89,155.5C55.3,149.59,51.7,160.74,48.11,164.25C44.52,167.76,40.93,163.64,37.33,169.5C33.74,175.36,30.15,191.2,26.56,194C22.96,196.8,19.37,186.55,15.78,183.5C12.19,180.45,8.59,184.6,5,188.75Z" fill="url(#gD)" fill-opacity="0.6"/><path d="M5,149.9C8.59,156.19,12.19,162.47,15.78,166.53C19.37,170.58,22.96,172.4,26.56,164.78C30.15,157.15,33.74,140.08,37.33,127.15C40.93,114.22,44.52,105.45,48.11,98.98C51.7,92.5,55.3,88.33,58.89,102.83C62.48,117.32,66.07,150.47,69.67,140.62C73.26,130.78,76.85,77.95,80.44,87.42C84.04,96.9,87.63,168.67,91.22,185.42C94.81,202.18,98.41,163.93,102,136.07C105.59,108.22,109.19,90.76,112.78,96.52C116.37,102.29,119.96,131.29,123.56,127.15C127.15,123.01,130.74,85.73,134.33,88.65C137.93,91.57,141.52,134.69,145.11,152.53C148.7,170.36,152.3,162.91,155.89,164.25C159.48,165.59,163.07,175.71,166.67,157.6C170.26,139.49,173.85,93.14,177.44,73.95C181.04,54.76,184.63,62.74,188.22,79.55C191.81,96.36,195.41,122.02,199,140.97C202.59,159.93,206.19,172.18,209.78,173.17C213.37,174.17,216.96,163.9,220.56,156.03C224.15,148.15,227.74,142.66,231.33,146.05C234.93,149.44,238.52,161.72,242.11,150.6C245.7,139.48,249.3,104.98,252.89,96.52C256.48,88.07,260.07,105.67,263.67,133.62C267.26,161.58,270.85,199.91,274.44,179.12C278.04,158.34,281.63,78.46,285.22,74.47C288.81,70.49,292.41,142.41,296,162.15C299.59,181.89,303.19,149.45,306.78,117.88C310.37,86.3,313.96,55.6,317.56,69.05C321.15,82.5,324.74,140.08,328.33,147.62C331.93,155.17,335.52,112.66,339.11,109.48C342.7,106.29,346.3,142.44,349.89,138.52C353.48,134.61,357.07,90.65,360.67,74.13C364.26,57.6,367.85,68.52,371.44,62.58C375.04,56.63,378.63,33.83,382.22,36.85C385.81,39.87,389.41,68.73,393,94.6C396.59,120.47,400.19,143.37,403.78,152.17C407.37,160.98,410.96,155.71,414.56,143.78C418.15,131.84,421.74,113.25,425.33,105.97C428.93,98.7,432.52,102.76,436.11,109.12C439.7,115.49,443.3,124.17,446.89,138.52C450.48,152.88,454.07,172.91,457.67,152.53C461.26,132.14,464.85,71.34,468.44,50.85C472.04,30.36,475.63,50.18,479.22,65.72C482.81,81.27,486.41,92.53,490,85.85C493.59,79.17,497.19,54.53,500.78,54.17C504.37,53.82,507.96,77.73,511.56,98.62C515.15,119.52,518.74,137.4,522.33,142.38C525.93,147.35,529.52,139.44,533.11,143.78C536.7,148.11,540.3,164.71,543.89,176.15C547.48,187.59,551.07,193.86,554.67,179.83C558.26,165.79,561.85,131.44,565.44,120.15C569.04,108.86,572.63,120.64,576.22,125.05C579.81,129.46,583.41,126.49,587,136.07C590.59,145.66,594.19,167.79,597.78,147.98C601.37,128.16,604.96,66.4,608.56,61C612.15,55.6,615.74,106.55,619.33,140.97C622.93,175.4,626.52,193.28,630.11,178.6C633.7,163.92,637.3,116.66,640.89,106.5C644.48,96.34,648.07,123.29,651.67,143.6C655.26,163.91,658.85,177.6,662.44,148.85C666.04,120.1,669.63,48.91,673.22,61C676.81,73.09,680.41,168.47,684,168.97C687.59,169.48,691.19,75.11,694.78,71.67C698.37,68.24,701.96,155.75,705.56,175.1C709.15,194.45,712.74,145.64,716.33,119.8C719.93,93.96,723.52,91.09,727.11,93.72C730.7,96.36,734.3,104.51,737.89,91.62C741.48,78.74,745.07,44.82,748.67,54.35C752.26,63.88,755.85,116.84,759.44,152.88C763.04,188.91,766.63,208,770.22,172.65C773.81,137.3,777.41,47.52,781,55.4C784.59,63.28,788.19,168.82,791.78,178.08C795.37,187.33,798.96,100.29,802.56,73.95C806.15,47.61,809.74,81.98,813.33,100.03C816.93,118.07,820.52,119.8,824.11,95.83C827.7,71.85,831.3,22.15,834.89,40.87C838.48,59.6,842.07,146.73,845.67,166.53C849.26,186.32,852.85,138.79,856.44,104.57C860.04,70.36,863.63,49.46,867.22,64.85C870.81,80.24,874.41,131.93,878,148.67C881.59,165.42,885.19,147.23,888.78,112.27C892.37,77.32,895.96,25.6,899.56,38.25C903.15,50.9,906.74,127.93,910.33,160.4C913.93,192.87,917.52,180.79,921.11,157.07C924.7,133.36,928.3,98.02,931.89,72.55C935.48,47.08,939.07,31.48,942.67,50.85C946.26,70.22,949.85,124.57,953.44,153.93C957.04,183.28,960.63,187.64,964.22,168.97C967.81,150.31,971.41,108.63,975,66.95" fill="none" stroke="#e5e5e5" stroke-width="1"/><circle cx="112.77777777777777" cy="153.74999999999997" r="4" fill="#e5e5e5" stroke="#e5e5e5" stroke-width="0"/><circle cx="112.77777777777777" cy="96.52499999999999" r="4" fill="#e5e5e5"/><text x="15.78" y="237.7" text-anchor="middle" font-size="12" fill="#a1a1a1" font-family="Liberation Sans">Apr 2</text><text x="80.44" y="237.7" text-anchor="middle" font-size="12" fill="#a1a1a1" font-family="Liberation Sans">Apr 8</text><text x="145.11" y="237.7" text-anchor="middle" font-size="12" fill="#a1a1a1" font-family="Liberation Sans">Apr 14</text><text x="220.56" y="237.7" text-anchor="middle" font-size="12" fill="#a1a1a1" font-family="Liberation Sans">Apr 21</text><text x="296.00" y="237.7" text-anchor="middle" font-size="12" fill="#a1a1a1" font-family="Liberation Sans">Apr 28</text><text x="371.44" y="237.7" text-anchor="middle" font-size="12" fill="#a1a1a1" font-family="Liberation Sans">May 5</text><text x="446.89" y="237.7" text-anchor="middle" font-size="12" fill="#a1a1a1" font-family="Liberation Sans">May 12</text><text x="522.33" y="237.7" text-anchor="middle" font-size="12" fill="#a1a1a1" font-family="Liberation Sans">May 19</text><text x="597.78" y="237.7" text-anchor="middle" font-size="12" fill="#a1a1a1" font-family="Liberation Sans">May 26</text><text x="673.22" y="237.7" text-anchor="middle" font-size="12" fill="#a1a1a1" font-family="Liberation Sans">Jun 2</text><text x="737.89" y="237.7" text-anchor="middle" font-size="12" fill="#a1a1a1" font-family="Liberation Sans">Jun 8</text><text x="813.33" y="237.7" text-anchor="middle" font-size="12" fill="#a1a1a1" font-family="Liberation Sans">Jun 15</text><text x="888.78" y="237.7" text-anchor="middle" font-size="12" fill="#a1a1a1" font-family="Liberation Sans">Jun 22</text><text x="979.3" y="237.7" text-anchor="end" font-size="12" fill="#a1a1a1" font-family="Liberation Sans">Jun 30</text></svg><div class="tip"><div class="m" style="height:19px;line-height:16px">Apr 11</div><div class="row"><div class="sq"></div><div class="lbl">Mobile</div><div class="num">350</div></div><div class="row"><div class="sq"></div><div class="lbl">Desktop</div><div class="num">327</div></div></div></div></div><div class="tabs m"><div class="tab on">Outline</div><div class="tab">Past Performance <span class="cnt">3</span></div><div class="tab">Key Personnel <span class="cnt">2</span></div><div class="tab">Focus Documents</div></div><div class="btn" style="left:725px;width:196.5px;padding:0 10px;gap:6px"><svg class="ic " style="" width="16" height="16" viewBox="0 0 24 24" fill="none" stroke="currentColor" stroke-width="2" stroke-linecap="round" stroke-linejoin="round"><path d="M4 4m0 2a2 2 0 0 1 2 -2h12a2 2 0 0 1 2 2v12a2 2 0 0 1 -2 2h-12a2 2 0 0 1 -2 -2z"/><path d="M12 4l0 16"/></svg><span class="m" style="margin-right:2px">Customize Columns</span><svg class="ic " style="" width="16" height="16" viewBox="0 0 24 24" fill="none" stroke="currentColor" stroke-width="2" stroke-linecap="round" stroke-linejoin="round"><path d="M6 9l6 6l6 -6"/></svg></div><div class="btn" style="left:930px;width:124px;padding:0 10px;gap:6px"><svg class="ic " style="" width="16" height="16" viewBox="0 0 24 24" fill="none" stroke="currentColor" stroke-width="2" stroke-linecap="round" stroke-linejoin="round"><path d="M12 5l0 14"/><path d="M5 12l14 0"/></svg><span class="m">Add Section</span></div><div class="tbl"><div class="thead"><div class="cb" style="top:12px"></div><div class="c th m" style="left:77px">Header</div><div class="c th m" style="left:391px">Section Type</div><div class="c th m" style="left:539.7px">Status</div><div class="c th m" style="left:672px;width:42px;text-align:right">Target</div><div class="c th m" style="left:760px;width:36.5px;text-align:right">Limit</div><div class="c th m" style="left:813px">Reviewer</div></div><div class="tr" style="top:41.0px"><div class="grip"><svg class="ic " style="" width="12" height="12" viewBox="0 0 24 24" fill="none" stroke="currentColor" stroke-width="2" stroke-linecap="round" stroke-linejoin="round"><path d="M9 5m-1 0a1 1 0 1 0 2 0a1 1 0 1 0 -2 0"/><path d="M9 12m-1 0a1 1 0 1 0 2 0a1 1 0 1 0 -2 0"/><path d="M9 19m-1 0a1 1 0 1 0 2 0a1 1 0 1 0 -2 0"/><path d="M15 5m-1 0a1 1 0 1 0 2 0a1 1 0 1 0 -2 0"/><path d="M15 12m-1 0a1 1 0 1 0 2 0a1 1 0 1 0 -2 0"/><path d="M15 19m-1 0a1 1 0 1 0 2 0a1 1 0 1 0 -2 0"/></svg></div><div class="cb" style="top:18px"></div><div class="c td m" style="left:77px">Cover page</div><div class="pill" style="left:390.8px;letter-spacing:.3px">Cover page</div><div class="pill" style="left:539.7px"><svg class="ic " style="" width="12" height="12" viewBox="0 0 24 24" fill="none" stroke="currentColor" stroke-width="2" stroke-linecap="round" stroke-linejoin="round"><path d="M12 6l0 -3"/><path d="M16.25 7.75l2.15 -2.15"/><path d="M18 12l3 0"/><path d="M16.25 16.25l2.15 2.15"/><path d="M12 18l0 3"/><path d="M7.75 16.25l-2.15 2.15"/><path d="M6 12l-3 0"/><path d="M7.75 7.75l-2.15 -2.15"/></svg><span>In Process</span></div><div class="c td num" style="left:658.3px">18</div><div class="c td num" style="left:740.5px">5</div><div class="c td" style="left:813px">Eddie Lake</div><div class="act"><svg class="ic " style="" width="16" height="16" viewBox="0 0 24 24" fill="none" stroke="currentColor" stroke-width="2" stroke-linecap="round" stroke-linejoin="round"><path d="M12 12m-1 0a1 1 0 1 0 2 0a1 1 0 1 0 -2 0"/><path d="M12 19m-1 0a1 1 0 1 0 2 0a1 1 0 1 0 -2 0"/><path d="M12 5m-1 0a1 1 0 1 0 2 0a1 1 0 1 0 -2 0"/></svg></div></div><div class="tr" style="top:93.9px"><div class="grip"><svg class="ic " style="" width="12" height="12" viewBox="0 0 24 24" fill="none" stroke="currentColor" stroke-width="2" stroke-linecap="round" stroke-linejoin="round"><path d="M9 5m-1 0a1 1 0 1 0 2 0a1 1 0 1 0 -2 0"/><path d="M9 12m-1 0a1 1 0 1 0 2 0a1 1 0 1 0 -2 0"/><path d="M9 19m-1 0a1 1 0 1 0 2 0a1 1 0 1 0 -2 0"/><path d="M15 5m-1 0a1 1 0 1 0 2 0a1 1 0 1 0 -2 0"/><path d="M15 12m-1 0a1 1 0 1 0 2 0a1 1 0 1 0 -2 0"/><path d="M15 19m-1 0a1 1 0 1 0 2 0a1 1 0 1 0 -2 0"/></svg></div><div class="cb" style="top:18px"></div><div class="c td m" style="left:77px">Table of contents</div><div class="pill" style="left:390.8px;letter-spacing:.3px">Table of contents</div><div class="pill" style="left:539.7px"><svg class="ic " style="" width="12" height="12" viewBox="0 0 24 24" fill="#05df72"><path d="M17 3.34a10 10 0 1 1 -14.995 8.984l-.005 -.324l.005 -.324a10 10 0 0 1 14.995 -8.336zm-1.293 5.953a1 1 0 0 0 -1.32 -.083l-.094 .083l-3.293 3.292l-1.293 -1.292l-.094 -.083a1 1 0 0 0 -1.403 1.403l.083 .094l2 2l.094 .083a1 1 0 0 0 1.226 0l.094 -.083l4 -4l.083 -.094a1 1 0 0 0 -.083 -1.32z"/></svg><span>Done</span></div><div class="c td num" style="left:658.3px">29</div><div class="c td num" style="left:740.5px">24</div><div class="c td" style="left:813px">Eddie Lake</div><div class="act"><svg class="ic " style="" width="16" height="16" viewBox="0 0 24 24" fill="none" stroke="currentColor" stroke-width="2" stroke-linecap="round" stroke-linejoin="round"><path d="M12 12m-1 0a1 1 0 1 0 2 0a1 1 0 1 0 -2 0"/><path d="M12 19m-1 0a1 1 0 1 0 2 0a1 1 0 1 0 -2 0"/><path d="M12 5m-1 0a1 1 0 1 0 2 0a1 1 0 1 0 -2 0"/></svg></div></div><div class="tr" style="top:146.8px"><div class="grip"><svg class="ic " style="" width="12" height="12" viewBox="0 0 24 24" fill="none" stroke="currentColor" stroke-width="2" stroke-linecap="round" stroke-linejoin="round"><path d="M9 5m-1 0a1 1 0 1 0 2 0a1 1 0 1 0 -2 0"/><path d="M9 12m-1 0a1 1 0 1 0 2 0a1 1 0 1 0 -2 0"/><path d="M9 19m-1 0a1 1 0 1 0 2 0a1 1 0 1 0 -2 0"/><path d="M15 5m-1 0a1 1 0 1 0 2 0a1 1 0 1 0 -2 0"/><path d="M15 12m-1 0a1 1 0 1 0 2 0a1 1 0 1 0 -2 0"/><path d="M15 19m-1 0a1 1 0 1 0 2 0a1 1 0 1 0 -2 0"/></svg></div><div class="cb" style="top:18px"></div><div class="c td m" style="left:77px">Executive summary</div><div class="pill" style="left:390.8px;letter-spacing:.3px">Narrative</div><div class="pill" style="left:539.7px"><svg class="ic " style="" width="12" height="12" viewBox="0 0 24 24" fill="#05df72"><path d="M17 3.34a10 10 0 1 1 -14.995 8.984l-.005 -.324l.005 -.324a10 10 0 0 1 14.995 -8.336zm-1.293 5.953a1 1 0 0 0 -1.32 -.083l-.094 .083l-3.293 3.292l-1.293 -1.292l-.094 -.083a1 1 0 0 0 -1.403 1.403l.083 .094l2 2l.094 .083a1 1 0 0 0 1.226 0l.094 -.083l4 -4l.083 -.094a1 1 0 0 0 -.083 -1.32z"/></svg><span>Done</span></div><div class="c td num" style="left:658.3px">10</div><div class="c td num" style="left:740.5px">13</div><div class="c td" style="left:813px">Eddie Lake</div><div class="act"><svg class="ic " style="" width="16" height="16" viewBox="0 0 24 24" fill="none" stroke="currentColor" stroke-width="2" stroke-linecap="round" stroke-linejoin="round"><path d="M12 12m-1 0a1 1 0 1 0 2 0a1 1 0 1 0 -2 0"/><path d="M12 19m-1 0a1 1 0 1 0 2 0a1 1 0 1 0 -2 0"/><path d="M12 5m-1 0a1 1 0 1 0 2 0a1 1 0 1 0 -2 0"/></svg></div></div><div class="tr" style="top:199.7px"><div class="grip"><svg class="ic " style="" width="12" height="12" viewBox="0 0 24 24" fill="none" stroke="currentColor" stroke-width="2" stroke-linecap="round" stroke-linejoin="round"><path d="M9 5m-1 0a1 1 0 1 0 2 0a1 1 0 1 0 -2 0"/><path d="M9 12m-1 0a1 1 0 1 0 2 0a1 1 0 1 0 -2 0"/><path d="M9 19m-1 0a1 1 0 1 0 2 0a1 1 0 1 0 -2 0"/><path d="M15 5m-1 0a1 1 0 1 0 2 0a1 1 0 1 0 -2 0"/><path d="M15 12m-1 0a1 1 0 1 0 2 0a1 1 0 1 0 -2 0"/><path d="M15 19m-1 0a1 1 0 1 0 2 0a1 1 0 1 0 -2 0"/></svg></div><div class="cb" style="top:18px"></div><div class="c td m" style="left:77px">Technical approach</div><div class="pill" style="left:390.8px;letter-spacing:.3px">Narrative</div><div class="pill" style="left:539.7px"><svg class="ic " style="" width="12" height="12" viewBox="0 0 24 24" fill="#05df72"><path d="M17 3.34a10 10 0 1 1 -14.995 8.984l-.005 -.324l.005 -.324a10 10 0 0 1 14.995 -8.336zm-1.293 5.953a1 1 0 0 0 -1.32 -.083l-.094 .083l-3.293 3.292l-1.293 -1.292l-.094 -.083a1 1 0 0 0 -1.403 1.403l.083 .094l2 2l.094 .083a1 1 0 0 0 1.226 0l.094 -.083l4 -4l.083 -.094a1 1 0 0 0 -.083 -1.32z"/></svg><span>Done</span></div><div class="c td num" style="left:658.3px">27</div><div class="c td num" style="left:740.5px">23</div><div class="c td" style="left:813px">Jamik Tashpulatov</div><div class="act"><svg class="ic " style="" width="16" height="16" viewBox="0 0 24 24" fill="none" stroke="currentColor" stroke-width="2" stroke-linecap="round" stroke-linejoin="round"><path d="M12 12m-1 0a1 1 0 1 0 2 0a1 1 0 1 0 -2 0"/><path d="M12 19m-1 0a1 1 0 1 0 2 0a1 1 0 1 0 -2 0"/><path d="M12 5m-1 0a1 1 0 1 0 2 0a1 1 0 1 0 -2 0"/></svg></div></div><div class="tr" style="top:252.6px"><div class="grip"><svg class="ic " style="" width="12" height="12" viewBox="0 0 24 24" fill="none" stroke="currentColor" stroke-width="2" stroke-linecap="round" stroke-linejoin="round"><path d="M9 5m-1 0a1 1 0 1 0 2 0a1 1 0 1 0 -2 0"/><path d="M9 12m-1 0a1 1 0 1 0 2 0a1 1 0 1 0 -2 0"/><path d="M9 19m-1 0a1 1 0 1 0 2 0a1 1 0 1 0 -2 0"/><path d="M15 5m-1 0a1 1 0 1 0 2 0a1 1 0 1 0 -2 0"/><path d="M15 12m-1 0a1 1 0 1 0 2 0a1 1 0 1 0 -2 0"/><path d="M15 19m-1 0a1 1 0 1 0 2 0a1 1 0 1 0 -2 0"/></svg></div><div class="cb" style="top:18px"></div><div class="c td m" style="left:77px">Design</div><div class="pill" style="left:390.8px;letter-spacing:.3px">Narrative</div><div class="pill" style="left:539.7px"><svg class="ic " style="" width="12" height="12" viewBox="0 0 24 24" fill="none" stroke="currentColor" stroke-width="2" stroke-linecap="round" stroke-linejoin="round"><path d="M12 6l0 -3"/><path d="M16.25 7.75l2.15 -2.15"/><path d="M18 12l3 0"/><path d="M16.25 16.25l2.15 2.15"/><path d="M12 18l0 3"/><path d="M7.75 16.25l-2.15 2.15"/><path d="M6 12l-3 0"/><path d="M7.75 7.75l-2.15 -2.15"/></svg><span>In Process</span></div><div class="c td num" style="left:658.3px">2</div><div class="c td num" style="left:740.5px">16</div><div class="c td" style="left:813px">Jamik Tashpulatov</div><div class="act"><svg class="ic " style="" width="16" height="16" viewBox="0 0 24 24" fill="none" stroke="currentColor" stroke-width="2" stroke-linecap="round" stroke-linejoin="round"><path d="M12 12m-1 0a1 1 0 1 0 2 0a1 1 0 1 0 -2 0"/><path d="M12 19m-1 0a1 1 0 1 0 2 0a1 1 0 1 0 -2 0"/><path d="M12 5m-1 0a1 1 0 1 0 2 0a1 1 0 1 0 -2 0"/></svg></div></div><div class="tr" style="top:305.5px"><div class="grip"><svg class="ic " style="" width="12" height="12" viewBox="0 0 24 24" fill="none" stroke="currentColor" stroke-width="2" stroke-linecap="round" stroke-linejoin="round"><path d="M9 5m-1 0a1 1 0 1 0 2 0a1 1 0 1 0 -2 0"/><path d="M9 12m-1 0a1 1 0 1 0 2 0a1 1 0 1 0 -2 0"/><path d="M9 19m-1 0a1 1 0 1 0 2 0a1 1 0 1 0 -2 0"/><path d="M15 5m-1 0a1 1 0 1 0 2 0a1 1 0 1 0 -2 0"/><path d="M15 12m-1 0a1 1 0 1 0 2 0a1 1 0 1 0 -2 0"/><path d="M15 19m-1 0a1 1 0 1 0 2 0a1 1 0 1 0 -2 0"/></svg></div><div class="cb" style="top:18px"></div><div class="c td m" style="left:77px">Capabilities</div><div class="pill" style="left:390.8px;letter-spacing:.3px">Narrative</div><div class="pill" style="left:539.7px"><svg class="ic " style="" width="12" height="12" viewBox="0 0 24 24" fill="none" stroke="currentColor" stroke-width="2" stroke-linecap="round" stroke-linejoin="round"><path d="M12 6l0 -3"/><path d="M16.25 7.75l2.15 -2.15"/><path d="M18 12l3 0"/><path d="M16.25 16.25l2.15 2.15"/><path d="M12 18l0 3"/><path d="M7.75 16.25l-2.15 2.15"/><path d="M6 12l-3 0"/><path d="M7.75 7.75l-2.15 -2.15"/></svg><span>In Process</span></div><div class="c td num" style="left:658.3px">20</div><div class="c td num" style="left:740.5px">8</div><div class="c td" style="left:813px">Jamik Tashpulatov</div><div class="act"><svg class="ic " style="" width="16" height="16" viewBox="0 0 24 24" fill="none" stroke="currentColor" stroke-width="2" stroke-linecap="round" stroke-linejoin="round"><path d="M12 12m-1 0a1 1 0 1 0 2 0a1 1 0 1 0 -2 0"/><path d="M12 19m-1 0a1 1 0 1 0 2 0a1 1 0 1 0 -2 0"/><path d="M12 5m-1 0a1 1 0 1 0 2 0a1 1 0 1 0 -2 0"/></svg></div></div><div class="tr" style="top:358.4px"><div class="grip"><svg class="ic " style="" width="12" height="12" viewBox="0 0 24 24" fill="none" stroke="currentColor" stroke-width="2" stroke-linecap="round" stroke-linejoin="round"><path d="M9 5m-1 0a1 1 0 1 0 2 0a1 1 0 1 0 -2 0"/><path d="M9 12m-1 0a1 1 0 1 0 2 0a1 1 0 1 0 -2 0"/><path d="M9 19m-1 0a1 1 0 1 0 2 0a1 1 0 1 0 -2 0"/><path d="M15 5m-1 0a1 1 0 1 0 2 0a1 1 0 1 0 -2 0"/><path d="M15 12m-1 0a1 1 0 1 0 2 0a1 1 0 1 0 -2 0"/><path d="M15 19m-1 0a1 1 0 1 0 2 0a1 1 0 1 0 -2 0"/></svg></div><div class="cb" style="top:18px"></div><div class="c td m" style="left:77px">Integration with existing systems</div><div class="pill" style="left:390.8px;letter-spacing:.3px">Narrative</div><div class="pill" style="left:539.7px"><svg class="ic " style="" width="12" height="12" viewBox="0 0 24 24" fill="none" stroke="currentColor" stroke-width="2" stroke-linecap="round" stroke-linejoin="round"><path d="M12 6l0 -3"/><path d="M16.25 7.75l2.15 -2.15"/><path d="M18 12l3 0"/><path d="M16.25 16.25l2.15 2.15"/><path d="M12 18l0 3"/><path d="M7.75 16.25l-2.15 2.15"/><path d="M6 12l-3 0"/><path d="M7.75 7.75l-2.15 -2.15"/></svg><span>In Process</span></div><div class="c td num" style="left:658.3px">19</div><div class="c td num" style="left:740.5px">21</div><div class="c td" style="left:813px">Jamik Tashpulatov</div><div class="act"><svg class="ic " style="" width="16" height="16" viewBox="0 0 24 24" fill="none" stroke="currentColor" stroke-width="2" stroke-linecap="round" stroke-linejoin="round"><path d="M12 12m-1 0a1 1 0 1 0 2 0a1 1 0 1 0 -2 0"/><path d="M12 19m-1 0a1 1 0 1 0 2 0a1 1 0 1 0 -2 0"/><path d="M12 5m-1 0a1 1 0 1 0 2 0a1 1 0 1 0 -2 0"/></svg></div></div><div class="tr" style="top:411.3px"><div class="grip"><svg class="ic " style="" width="12" height="12" viewBox="0 0 24 24" fill="none" stroke="currentColor" stroke-width="2" stroke-linecap="round" stroke-linejoin="round"><path d="M9 5m-1 0a1 1 0 1 0 2 0a1 1 0 1 0 -2 0"/><path d="M9 12m-1 0a1 1 0 1 0 2 0a1 1 0 1 0 -2 0"/><path d="M9 19m-1 0a1 1 0 1 0 2 0a1 1 0 1 0 -2 0"/><path d="M15 5m-1 0a1 1 0 1 0 2 0a1 1 0 1 0 -2 0"/><path d="M15 12m-1 0a1 1 0 1 0 2 0a1 1 0 1 0 -2 0"/><path d="M15 19m-1 0a1 1 0 1 0 2 0a1 1 0 1 0 -2 0"/></svg></div><div class="cb" style="top:18px"></div><div class="c td m" style="left:77px">Innovation and Advantages</div><div class="pill" style="left:390.8px;letter-spacing:.3px">Narrative</div><div class="pill" style="left:539.7px"><svg class="ic " style="" width="12" height="12" viewBox="0 0 24 24" fill="#05df72"><path d="M17 3.34a10 10 0 1 1 -14.995 8.984l-.005 -.324l.005 -.324a10 10 0 0 1 14.995 -8.336zm-1.293 5.953a1 1 0 0 0 -1.32 -.083l-.094 .083l-3.293 3.292l-1.293 -1.292l-.094 -.083a1 1 0 0 0 -1.403 1.403l.083 .094l2 2l.094 .083a1 1 0 0 0 1.226 0l.094 -.083l4 -4l.083 -.094a1 1 0 0 0 -.083 -1.32z"/></svg><span>Done</span></div><div class="c td num" style="left:658.3px">25</div><div class="c td num" style="left:740.5px">26</div><div class="sel"><span>Assign reviewer</span><svg class="ic " style="" width="16" height="16" viewBox="0 0 24 24" fill="none" stroke="currentColor" stroke-width="2" stroke-linecap="round" stroke-linejoin="round"><path d="M6 9l6 6l6 -6"/></svg></div><div class="act"><svg class="ic " style="" width="16" height="16" viewBox="0 0 24 24" fill="none" stroke="currentColor" stroke-width="2" stroke-linecap="round" stroke-linejoin="round"><path d="M12 12m-1 0a1 1 0 1 0 2 0a1 1 0 1 0 -2 0"/><path d="M12 19m-1 0a1 1 0 1 0 2 0a1 1 0 1 0 -2 0"/><path d="M12 5m-1 0a1 1 0 1 0 2 0a1 1 0 1 0 -2 0"/></svg></div></div><div class="tr" style="top:464.2px"><div class="grip"><svg class="ic " style="" width="12" height="12" viewBox="0 0 24 24" fill="none" stroke="currentColor" stroke-width="2" stroke-linecap="round" stroke-linejoin="round"><path d="M9 5m-1 0a1 1 0 1 0 2 0a1 1 0 1 0 -2 0"/><path d="M9 12m-1 0a1 1 0 1 0 2 0a1 1 0 1 0 -2 0"/><path d="M9 19m-1 0a1 1 0 1 0 2 0a1 1 0 1 0 -2 0"/><path d="M15 5m-1 0a1 1 0 1 0 2 0a1 1 0 1 0 -2 0"/><path d="M15 12m-1 0a1 1 0 1 0 2 0a1 1 0 1 0 -2 0"/><path d="M15 19m-1 0a1 1 0 1 0 2 0a1 1 0 1 0 -2 0"/></svg></div><div class="cb" style="top:18px"></div><div class="c td m" style="left:77px">Overview of EMR's Innovative Solutions</div><div class="pill" style="left:390.8px;letter-spacing:.3px">Technical content</div><div class="pill" style="left:539.7px"><svg class="ic " style="" width="12" height="12" viewBox="0 0 24 24" fill="#05df72"><path d="M17 3.34a10 10 0 1 1 -14.995 8.984l-.005 -.324l.005 -.324a10 10 0 0 1 14.995 -8.336zm-1.293 5.953a1 1 0 0 0 -1.32 -.083l-.094 .083l-3.293 3.292l-1.293 -1.292l-.094 -.083a1 1 0 0 0 -1.403 1.403l.083 .094l2 2l.094 .083a1 1 0 0 0 1.226 0l.094 -.083l4 -4l.083 -.094a1 1 0 0 0 -.083 -1.32z"/></svg><span>Done</span></div><div class="c td num" style="left:658.3px">7</div><div class="c td num" style="left:740.5px">23</div><div class="sel"><span>Assign reviewer</span><svg class="ic " style="" width="16" height="16" viewBox="0 0 24 24" fill="none" stroke="currentColor" stroke-width="2" stroke-linecap="round" stroke-linejoin="round"><path d="M6 9l6 6l6 -6"/></svg></div><div class="act"><svg class="ic " style="" width="16" height="16" viewBox="0 0 24 24" fill="none" stroke="currentColor" stroke-width="2" stroke-linecap="round" stroke-linejoin="round"><path d="M12 12m-1 0a1 1 0 1 0 2 0a1 1 0 1 0 -2 0"/><path d="M12 19m-1 0a1 1 0 1 0 2 0a1 1 0 1 0 -2 0"/><path d="M12 5m-1 0a1 1 0 1 0 2 0a1 1 0 1 0 -2 0"/></svg></div></div><div class="tr last" style="top:517.0999999999999px"><div class="grip"><svg class="ic " style="" width="12" height="12" viewBox="0 0 24 24" fill="none" stroke="currentColor" stroke-width="2" stroke-linecap="round" stroke-linejoin="round"><path d="M9 5m-1 0a1 1 0 1 0 2 0a1 1 0 1 0 -2 0"/><path d="M9 12m-1 0a1 1 0 1 0 2 0a1 1 0 1 0 -2 0"/><path d="M9 19m-1 0a1 1 0 1 0 2 0a1 1 0 1 0 -2 0"/><path d="M15 5m-1 0a1 1 0 1 0 2 0a1 1 0 1 0 -2 0"/><path d="M15 12m-1 0a1 1 0 1 0 2 0a1 1 0 1 0 -2 0"/><path d="M15 19m-1 0a1 1 0 1 0 2 0a1 1 0 1 0 -2 0"/></svg></div><div class="cb" style="top:18px"></div><div class="c td m" style="left:77px">Advanced Algorithms and Machine Learning</div><div class="pill" style="left:390.8px;letter-spacing:.3px">Narrative</div><div class="pill" style="left:539.7px"><svg class="ic " style="" width="12" height="12" viewBox="0 0 24 24" fill="#05df72"><path d="M17 3.34a10 10 0 1 1 -14.995 8.984l-.005 -.324l.005 -.324a10 10 0 0 1 14.995 -8.336zm-1.293 5.953a1 1 0 0 0 -1.32 -.083l-.094 .083l-3.293 3.292l-1.293 -1.292l-.094 -.083a1 1 0 0 0 -1.403 1.403l.083 .094l2 2l.094 .083a1 1 0 0 0 1.226 0l.094 -.083l4 -4l.083 -.094a1 1 0 0 0 -.083 -1.32z"/></svg><span>Done</span></div><div class="c td num" style="left:658.3px">30</div><div class="c td num" style="left:740.5px">28</div><div class="sel"><span>Assign reviewer</span><svg class="ic " style="" width="16" height="16" viewBox="0 0 24 24" fill="none" stroke="currentColor" stroke-width="2" stroke-linecap="round" stroke-linejoin="round"><path d="M6 9l6 6l6 -6"/></svg></div><div class="act"><svg class="ic " style="" width="16" height="16" viewBox="0 0 24 24" fill="none" stroke="currentColor" stroke-width="2" stroke-linecap="round" stroke-linejoin="round"><path d="M12 12m-1 0a1 1 0 1 0 2 0a1 1 0 1 0 -2 0"/><path d="M12 19m-1 0a1 1 0 1 0 2 0a1 1 0 1 0 -2 0"/><path d="M12 5m-1 0a1 1 0 1 0 2 0a1 1 0 1 0 -2 0"/></svg></div></div></div><div class="foot-l ws">0 of 68 row(s) selected.</div><div class="foot-r m" style="left:566.8px">Rows per page</div><div class="btn" style="left:672px;top:1357px;width:80px;padding:0 12px;justify-content:space-between"><span>10</span><svg class="ic " style="color:#a1a1a1" width="16" height="16" viewBox="0 0 24 24" fill="none" stroke="currentColor" stroke-width="2" stroke-linecap="round" stroke-linejoin="round"><path d="M6 9l6 6l6 -6"/></svg></div><div class="foot-r" style="left:784.5px;-webkit-text-stroke:.15px currentColor">Page 1 of 7</div><div class="pbtn dis" style="left:886px"><svg class="ic " style="" width="16" height="16" viewBox="0 0 24 24" fill="none" stroke="currentColor" stroke-width="2" stroke-linecap="round" stroke-linejoin="round"><path d="M11 7l-5 5l5 5"/><path d="M17 7l-5 5l5 5"/></svg></div><div class="pbtn dis" style="left:926px"><svg class="ic " style="" width="16" height="16" viewBox="0 0 24 24" fill="none" stroke="currentColor" stroke-width="2" stroke-linecap="round" stroke-linejoin="round"><path d="M15 6l-6 6l6 6"/></svg></div><div class="pbtn " style="left:966px"><svg class="ic " style="" width="16" height="16" viewBox="0 0 24 24" fill="none" stroke="currentColor" stroke-width="2" stroke-linecap="round" stroke-linejoin="round"><path d="M9 6l6 6l-6 6"/></svg></div><div class="pbtn " style="left:1006px"><svg class="ic " style="" width="16" height="16" viewBox="0 0 24 24" fill="none" stroke="currentColor" stroke-width="2" stroke-linecap="round" stroke-linejoin="round"><path d="M7 7l5 5l-5 5"/><path d="M13 7l5 5l-5 5"/></svg></div></main><div class="frame"></div></div></body></html>
